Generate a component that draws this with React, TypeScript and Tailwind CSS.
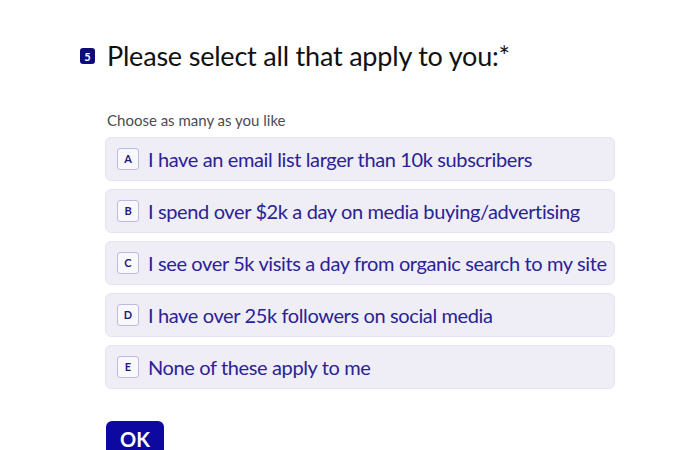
import React from "react"

const options = [
  { key: "A", label: "I have an email list larger than 10k subscribers" },
  { key: "B", label: "I spend over $2k a day on media buying/advertising" },
  { key: "C", label: "I see over 5k visits a day from organic search to my site" },
  { key: "D", label: "I have over 25k followers on social media" },
  { key: "E", label: "None of these apply to me" },
]

export default function App() {
  return (
    <div
      className="h-[450px] w-[686px] overflow-hidden bg-white"
      style={{ fontFamily: "Lato, 'Noto Sans', sans-serif" }}
    >
      <div className="pl-[80px] pt-[38px]">
        {/* question heading */}
        <div className="flex items-center">
          <span className="flex h-[16px] w-[15px] items-center justify-center rounded-[3px] bg-[#0f0c7a] text-[11px] font-bold leading-none text-white">
            5
          </span>
          <h1 className="ml-[12px] text-[27px] leading-[36px] tracking-[-0.2px] text-[#111111]">
            Please select all that apply to you:*
          </h1>
        </div>

        <div className="pl-[27px]">
          <p className="mt-[37px] text-[15px] leading-[18px] text-[#4b4b55]">
            Choose as many as you like
          </p>

          <div className="-ml-[2px] mt-[8px] flex w-[510px] flex-col gap-[8px]">
            {options.map((opt) => (
              <div
                key={opt.key}
                className="flex h-[44px] items-center rounded-[6px] border border-[#e4e3f0] bg-[#efeef7] pl-[11px]"
              >
                <span className="flex h-[22px] w-[22px] shrink-0 items-center justify-center rounded-[3px] border border-[#bdbbdb] bg-[#f9f9fd] text-[11px] font-bold text-[#1e1a7c]">
                  {opt.key}
                </span>
                <span className="ml-[9px] whitespace-nowrap text-[20px] tracking-[-0.375px] text-[#2b2294]">
                  {opt.label}
                </span>
              </div>
            ))}
          </div>

          <button className="-ml-[1px] mt-[32px] flex h-[40px] w-[58px] items-start justify-center rounded-[6px] bg-[#0d08a0] pt-[8px] text-[20px] font-bold leading-none text-white">
            OK
          </button>
        </div>
      </div>
    </div>
  )
}
